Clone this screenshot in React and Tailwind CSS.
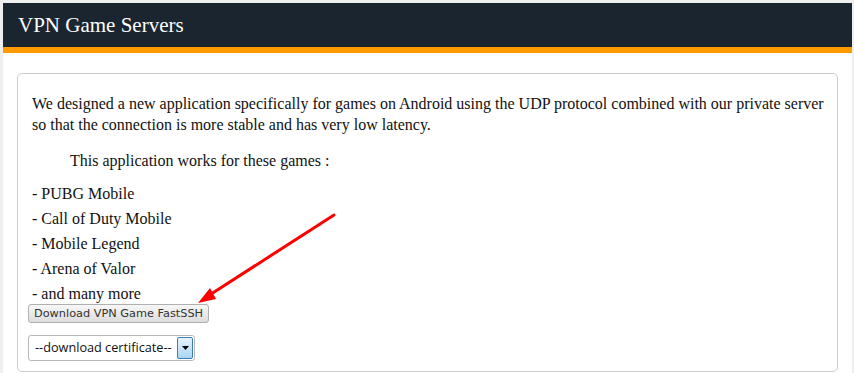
import React from "react";

export default function App() {
  const serif = { fontFamily: '"Liberation Serif", "Times New Roman", serif' };
  return (
    <div className="min-h-[373px] w-[854px] bg-[#efefef] pt-[3px] pl-[3px] pr-[2px] overflow-hidden">
      <div className="bg-white min-h-[370px] relative">
        <div className="h-[44px] bg-[#1a2530] flex items-center pl-[15px]">
          <h1 className="text-white text-[21px] leading-none" style={serif}>
            VPN Game Servers
          </h1>
        </div>
        <div className="h-[6px] bg-[#ff9900]" />
        <div className="pt-[20px] pl-[14px] pr-[14px]">
          <div className="border border-[#cccccc] rounded-[5px] pt-[19px] pl-[10px] pb-[9px] h-[299px]">
            <div className="text-[16px] text-[#111] leading-[21px] pl-[4px]" style={serif}>
              <p className="whitespace-nowrap">
                We designed a new application specifically for games on Android using the UDP protocol combined with our private server
              </p>
              <p className="whitespace-nowrap">so that the connection is more stable and has very low latency.</p>
              <p className="mt-[15px] pl-[38px]">This application works for these games :</p>
              <div className="mt-[10px] leading-[25px]">
                <p>- PUBG Mobile</p>
                <p>- Call of Duty Mobile</p>
                <p>- Mobile Legend</p>
                <p>- Arena of Valor</p>
                <p>- and many more</p>
              </div>
            </div>
            <button
              className="mt-[-2px] h-[19px] px-[5px] flex items-center border border-[#b0b0b0] rounded-[3px] bg-gradient-to-b from-[#f7f7f7] to-[#dddddd] text-[#333] text-[11.3px] leading-none"
              style={{ fontFamily: '"DejaVu Sans", Verdana, sans-serif' }}
            >
              Download VPN Game FastSSH
            </button>
            <div className="mt-[12px] w-[167px] h-[26px] border border-[#b8b8b8] rounded-[3px] bg-white flex items-center justify-between pl-[6px] pr-[1px]">
              <span
                className="text-[12.7px] text-[#111] whitespace-nowrap"
                style={{ fontFamily: '"Open Sans", "Liberation Sans", sans-serif' }}
              >
                --download certificate--
              </span>
              <span className="w-[16px] h-[22px] border border-[#3c7fb1] rounded-[2px] bg-gradient-to-b from-[#e6f3fd] to-[#a9d6f5] flex items-center justify-center">
                <svg width="7" height="4" viewBox="0 0 7 4">
                  <polygon points="0,0 7,0 3.5,4" fill="#000" />
                </svg>
              </span>
            </div>
          </div>
        </div>
        <svg
          className="absolute left-0 top-0 pointer-events-none"
          width="851"
          height="370"
          viewBox="0 0 851 370"
        >
          <line x1="331" y1="212" x2="205" y2="293" stroke="#ff0000" strokeWidth="3" strokeLinecap="round" />
          <polygon points="195,300 207,285 213,296" fill="#ff0000" />
        </svg>
      </div>
    </div>
  );
}
